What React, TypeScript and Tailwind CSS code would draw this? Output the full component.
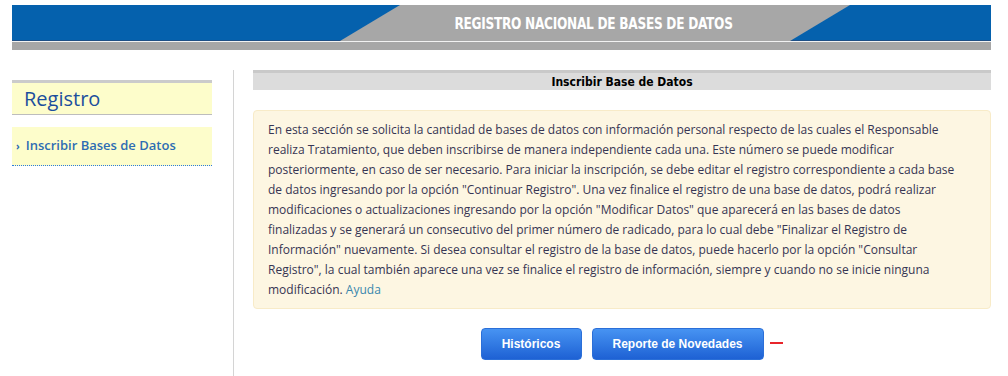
import React from 'react';

const bodyText =
  'En esta sección se solicita la cantidad de bases de datos con información personal respecto de las cuales el Responsable realiza Tratamiento, que deben inscribirse de manera independiente cada una. Este número se puede modificar posteriormente, en caso de ser necesario. Para iniciar la inscripción, se debe editar el registro correspondiente a cada base de datos ingresando por la opción "Continuar Registro". Una vez finalice el registro de una base de datos, podrá realizar modificaciones o actualizaciones ingresando por la opción "Modificar Datos" que aparecerá en las bases de datos finalizadas y se generará un consecutivo del primer número de radicado, para lo cual debe "Finalizar el Registro de Información" nuevamente. Si desea consultar el registro de la base de datos, puede hacerlo por la opción "Consultar Registro", la cual también aparece una vez se finalice el registro de información, siempre y cuando no se inicie ninguna modificación.';

function Banner() {
  return (
    <div className="relative h-[45px] w-[979px]">
      {/* banner artwork */}
      <svg className="absolute inset-0" width="979" height="45" viewBox="0 0 979 45">
        <rect x="0" y="0" width="979" height="35" fill="#0561ad" />
        <rect x="0" y="35" width="979" height="1" fill="#1d4f86" />
        <rect x="0" y="36" width="979" height="1" fill="#f2f2f2" />
        <rect x="0" y="37" width="979" height="8" fill="#a7a7a7" />
        <polygon points="388,0 838,0 778,36 328,36" fill="#a7a7a7" />
      </svg>
      <div className="absolute inset-0 flex items-center justify-center pb-[6px] pl-[184px]">
        <span className="text-[15px] font-bold text-white tracking-[-0.3px] [font-family:'DejaVu_Sans_Condensed','Liberation_Sans',sans-serif] scale-x-[0.9]">
          REGISTRO NACIONAL DE BASES DE DATOS
        </span>
      </div>
    </div>
  );
}

function Sidebar() {
  return (
    <div className="w-[200px] pt-[30px]">
      <div className="border-t-[3px] border-[#cbcbcb] bg-[#fdfdcb] h-[35px] border-b border-b-dotted border-b-[#bdbdbd] pl-[12px] flex items-center">
        <span className="text-[20px] leading-none text-[#1b4f9d]">Registro</span>
      </div>
      <div className="mt-[12px] bg-[#fdfdcb] h-[39px] border-b border-dotted border-[#2a7be0] flex items-center pl-[4px]">
        <span className="text-[10px] text-[#2a6ab5] mr-[6px] font-bold">›</span>
        <span className="text-[13px] font-semibold text-[#2e6db3]">Inscribir Bases de Datos</span>
      </div>
    </div>
  );
}

function Main() {
  return (
    <div className="w-[738px] pt-[20px]">
      <div className="h-[20px] bg-[#dcdcdc] border-t-[3px] border-[#c9c9c9] flex items-center justify-center">
        <span className="text-[12px] font-bold text-black [font-family:'DejaVu_Sans_Condensed','Liberation_Sans',sans-serif]">
          Inscribir Base de Datos
        </span>
      </div>
      <div className="mt-[20px] rounded-[4px] border border-[#f8ebc8] bg-[#fdf6e2] pl-[14px] pr-[14px] pt-[9px] pb-[8px]">
        <p className="text-[12px] leading-[20px] text-[#363553] w-[690px]">
          {bodyText} <span className="text-[#3a87ad]">Ayuda</span>
        </p>
      </div>
      <div className="mt-[19px] flex items-center justify-center gap-[10px]">
        <button className="h-[32px] w-[101px] rounded-[4px] border border-[#2b6fd8] bg-gradient-to-b from-[#4793f2] to-[#1e61d4] text-[12px] font-bold text-white [font-family:'Liberation_Sans',Arial,sans-serif]">
          Históricos
        </button>
        <div className="relative">
          <button className="h-[32px] w-[172px] rounded-[4px] border border-[#2b6fd8] bg-gradient-to-b from-[#4793f2] to-[#1e61d4] text-[12px] font-bold text-white [font-family:'Liberation_Sans',Arial,sans-serif]">
            Reporte de Novedades
          </button>
          <div className="absolute left-[178px] top-[14px] h-[2px] w-[13px] bg-[#e8252b]" />
        </div>
      </div>
    </div>
  );
}

export default function App() {
  return (
    <div className="w-[1008px] h-[376px] bg-white overflow-hidden pt-[5px] pl-[12px] [font-family:'Open_Sans',sans-serif]">
      <Banner />
      <div className="flex">
        <Sidebar />
        <div className="ml-[21px] mt-[20px] w-px h-[330px] bg-[#d4d4d4]" />
        <div className="ml-[19px]">
          <Main />
        </div>
      </div>
    </div>
  );
}
